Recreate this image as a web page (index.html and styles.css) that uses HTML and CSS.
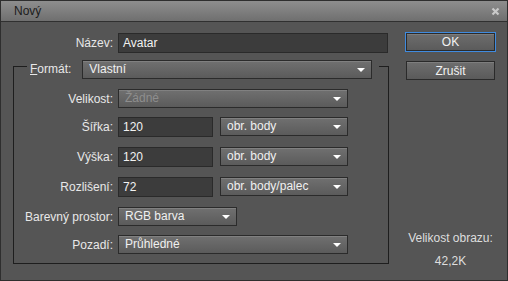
FILE: index.html
```html
<!DOCTYPE html>
<html>
<head>
    <title>Nový</title>
    <link rel="stylesheet" href="styles.css">
</head>
<body>
    <div class="dialog">
        <div class="titlebar">
            <span class="title">Nový</span>
            <svg class="close" width="9" height="9" viewBox="0 0 9 9">
                <path d="M1.5 1.5 L7.5 7.5 M7.5 1.5 L1.5 7.5" stroke="#c9c9c9" stroke-width="2.2"/>
            </svg>
        </div>

        <div class="content">
            <div class="main">
                <div class="row">
                    <span class="label">Název:</span>
                    <div class="field w-name">Avatar</div>
                </div>

                <!-- Format group box -->
                <fieldset class="group">
                    <legend>
                        <div class="legend-inner">
                            <span class="legend-label"><u>F</u>ormát:</span>
                            <div class="select w-format">Vlastní</div>
                        </div>
                    </legend>
                    <div class="rows">
                        <div class="row row-first">
                            <span class="label">Velikost:</span>
                            <div class="select disabled w-long">Žádné</div>
                        </div>
                        <div class="row">
                            <span class="label">Šířka:</span>
                            <div class="field w-num">120</div>
                            <div class="select w-unit">obr. body</div>
                        </div>
                        <div class="row">
                            <span class="label">Výška:</span>
                            <div class="field w-num">120</div>
                            <div class="select w-unit">obr. body</div>
                        </div>
                        <div class="row">
                            <span class="label">Rozlišení:</span>
                            <div class="field w-num">72</div>
                            <div class="select w-unit">obr. body/palec</div>
                        </div>
                        <div class="row">
                            <span class="label">Barevný prostor:</span>
                            <div class="select w-color">RGB barva</div>
                        </div>
                        <div class="row row-last">
                            <span class="label">Pozadí:</span>
                            <div class="select w-long">Průhledné</div>
                        </div>
                    </div>
                </fieldset>
            </div>

            <div class="side">
                <button class="btn btn-default">OK</button>
                <button class="btn">Zrušit</button>
                <div class="info">
                    <div>Velikost obrazu:</div>
                    <div class="info-value">42,2K</div>
                </div>
            </div>
        </div>
    </div>
</body>
</html>
```

FILE: styles.css
```css
/* Page */
body {
    margin: 0;
    font-family: 'Liberation Sans', Arial, sans-serif;
    font-size: 12px;
    color: #e8e8e8;
}

/* Dialog window */
.dialog {
    width: 508px;
    height: 281px;
    box-sizing: border-box;
    border: 1px solid #2e2e2e;
    background-color: #555555;
    display: flex;
    flex-direction: column;
}

.titlebar {
    height: 20px;
    flex-shrink: 0;
    border-bottom: 1px solid #303030;
    background: linear-gradient(#8e8e8e, #6f6f6f);
    display: flex;
    align-items: center;
    justify-content: space-between;
    padding: 0 7px 0 13px;
}

.title {
    color: #1c1c1c;
}

.content {
    flex: 1;
    display: flex;
    gap: 16px;
}

.main {
    padding: 11px 0 0 12px;
}

/* Form rows */
.row {
    display: flex;
    align-items: flex-start;
    gap: 5px;
    height: 20px;
}

.label {
    width: 100px;
    text-align: right;
    line-height: 20px;
    white-space: nowrap;
}

.group .label {
    width: 99px;
}

/* Text fields */
.field {
    height: 20px;
    box-sizing: border-box;
    border: 1px solid #2a2a2a;
    background-color: #3c3c3c;
    padding-left: 4px;
    line-height: 18px;
    color: #f2f2f2;
}

/* Drop-downs */
.select {
    position: relative;
    height: 19px;
    box-sizing: border-box;
    border: 1px solid #2b2b2b;
    background: linear-gradient(#707070, #5b5b5b);
    box-shadow: inset 0 1px 0 rgba(255, 255, 255, 0.12);
    padding-left: 6px;
    line-height: 17px;
    color: #f0f0f0;
}

.select::after {
    content: "";
    position: absolute;
    right: 6px;
    top: 7px;
    border-left: 4px solid transparent;
    border-right: 4px solid transparent;
    border-top: 4px solid #ffffff;
}

.select.disabled {
    color: #8e8e8e;
}

.w-name { width: 270px; }
.w-format { width: 290px; }
.w-long { width: 230px; }
.w-num { width: 95px; margin-right: 2px; }
.w-unit { width: 128px; }
.w-color { width: 119px; }

/* Format group box */
.group {
    margin: 0;
    padding: 0 0 8px 0;
    width: 376px;
    box-sizing: border-box;
    border: 1px solid #1e1e1e;
}

.group legend {
    margin-left: 13px;
    padding: 6px 7px 0 3px;
}

.legend-inner {
    display: flex;
    align-items: center;
    gap: 11px;
    height: 20px;
}

.rows {
    display: flex;
    flex-direction: column;
    gap: 10px;
    padding-top: 8px;
}

.row-first {
    margin-top: 2px;
    margin-bottom: -2px;
}

.row-last {
    margin-top: -2px;
}

/* Buttons column */
.side {
    width: 91px;
    display: flex;
    flex-direction: column;
    padding-top: 10px;
    padding-bottom: 12px;
}

.btn {
    height: 19px;
    margin: 9px 1px 0 1px;
    padding: 0;
    border: 1px solid #2a2a2a;
    background: linear-gradient(#6e6e6e, #5a5a5a);
    box-shadow: inset 0 1px 0 rgba(255, 255, 255, 0.12);
    color: #f2f2f2;
    font-family: inherit;
    font-size: 12px;
}

.btn-default {
    height: 20px;
    margin: 0;
    border-color: #3f8be0;
    box-shadow: inset 0 0 0 1px #2b2b2b, inset 0 2px 0 rgba(255, 255, 255, 0.12);
}

.info {
    margin-top: auto;
    text-align: center;
    color: #dedede;
    line-height: 14px;
}

.info-value {
    margin-top: 9px;
}
```
